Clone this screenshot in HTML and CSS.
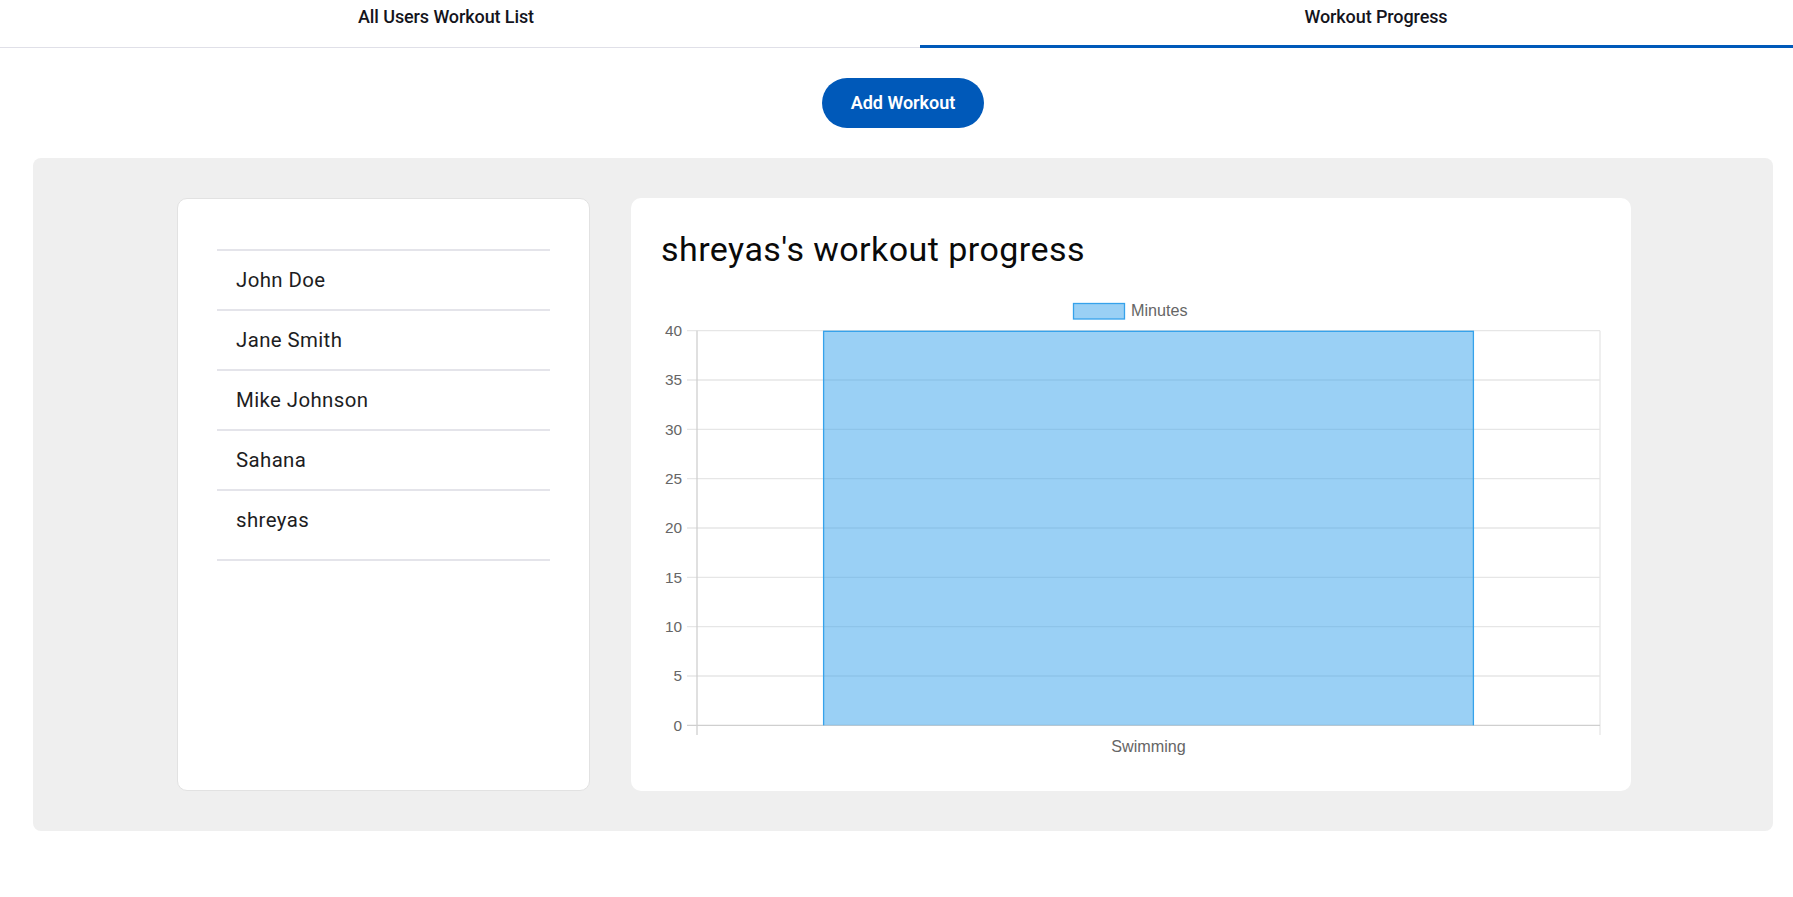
FILE: index.html
```html
<!DOCTYPE html>
<html lang="en">
<head>
<meta charset="utf-8">
<title>Workout Progress</title>
<link rel="stylesheet" href="styles.css">
</head>
<body>
<div class="page">
  <nav class="tabs">
    <div class="tab tab-list">All Users Workout List</div>
    <div class="tab tab-progress is-active">Workout Progress</div>
  </nav>

  <div class="actions">
    <button class="btn-add" type="button">Add Workout</button>
  </div>

  <section class="panel">
    <aside class="card users-card">
      <ul class="user-list">
        <li class="user-item">John Doe</li>
        <li class="user-item">Jane Smith</li>
        <li class="user-item">Mike Johnson</li>
        <li class="user-item">Sahana</li>
        <li class="user-item">shreyas</li>
      </ul>
    </aside>

    <main class="card progress-card">
      <h2 class="progress-title">shreyas's workout progress</h2>
      <svg class="chart" width="940" height="471" viewBox="0 0 940 471" xmlns="http://www.w3.org/2000/svg">
        <!-- legend -->
        <rect x="412.5" y="13.5" width="51" height="15.5" fill="rgba(54,162,235,0.5)" stroke="rgb(54,162,235)" stroke-width="1.3"/>
        <text x="470" y="26.3" class="chart-text">Minutes</text>

        <!-- horizontal grid lines + ticks -->
        <g stroke="#e6e6e6" stroke-width="1.3">
          <line x1="26" y1="40.7" x2="939" y2="40.7"/>
          <line x1="26" y1="90.0" x2="939" y2="90.0"/>
          <line x1="26" y1="139.3" x2="939" y2="139.3"/>
          <line x1="26" y1="188.7" x2="939" y2="188.7"/>
          <line x1="26" y1="238.0" x2="939" y2="238.0"/>
          <line x1="26" y1="287.3" x2="939" y2="287.3"/>
          <line x1="26" y1="336.7" x2="939" y2="336.7"/>
          <line x1="26" y1="386.0" x2="939" y2="386.0"/>
          <line x1="939" y1="40.7" x2="939" y2="445"/>
        </g>
        <g stroke="#cfcfcf" stroke-width="1.3">
          <line x1="26" y1="435.3" x2="939" y2="435.3"/>
          <line x1="36" y1="40.7" x2="36" y2="445"/>
        </g>

        <!-- y labels -->
        <g class="chart-text chart-ticks" text-anchor="end">
          <text x="21" y="46">40</text>
          <text x="21" y="95.3">35</text>
          <text x="21" y="144.6">30</text>
          <text x="21" y="194">25</text>
          <text x="21" y="243.3">20</text>
          <text x="21" y="292.6">15</text>
          <text x="21" y="342">10</text>
          <text x="21" y="391.3">5</text>
          <text x="21" y="440.6">0</text>
        </g>

        <!-- bar -->
        <rect x="162" y="40.7" width="651" height="394.6" fill="rgba(54,162,235,0.5)"/>
        <path d="M162.6 435.3 V41.3 H812.4 V435.3" fill="none" stroke="rgb(54,162,235)" stroke-width="1.3"/>

        <!-- x label -->
        <text x="487.5" y="462.3" class="chart-text" text-anchor="middle">Swimming</text>
      </svg>
    </main>
  </section>
</div>
</body>
</html>
```

FILE: styles.css
```css
html, body {
  margin: 0;
  padding: 0;
  overflow: hidden;
  background: #ffffff;
}

body {
  font-family: Roboto, "Noto Sans", Arial, sans-serif;
  color: #111;
}

.page {
  width: 1806px;
}

/* Tabs */
.tabs {
  display: flex;
  height: 47px;
  border-bottom: 1px solid #e0e0e8;
}

.tab {
  box-sizing: border-box;
  position: relative;
  height: 47px;
  padding-top: 6px;
  font-size: 18px;
  font-weight: 500;
  line-height: 21px;
  text-align: center;
  color: #14141c;
  letter-spacing: -0.1px;
}

.tab-list {
  flex: 0 0 920px;
  padding-right: 28px;
}

.tab-progress {
  flex: 1 1 auto;
  padding-left: 26px;
}

.tab.is-active::after {
  content: "";
  position: absolute;
  left: 0;
  right: 0;
  bottom: -1px;
  height: 3px;
  background: #0059b9;
}

/* Add button */
.actions {
  display: flex;
  justify-content: center;
  padding: 30px 0;
}

.btn-add {
  height: 50px;
  padding: 0 29px;
  border: none;
  border-radius: 25px;
  background: #0059b9;
  color: #fff;
  font-family: Roboto, Arial, sans-serif;
  font-size: 18px;
  font-weight: 600;
  line-height: 50px;
  cursor: pointer;
}

/* Panel */
.panel {
  margin: 0 33px;
  padding: 40px 40px 40px 42px;
  background: #efefef;
  border-radius: 8px;
  display: flex;
  justify-content: center;
  gap: 41px;
}

.card {
  box-sizing: border-box;
  background: #fff;
  border-radius: 10px;
  height: 593px;
}

.users-card {
  width: 413px;
  border: 1px solid #e2e2e2;
  padding: 50px 39px;
}

.user-list {
  list-style: none;
  margin: 0;
  padding: 0 0 10px;
  border-bottom: 2px solid #e4e4ea;
}

.user-item {
  height: 58px;
  border-top: 2px solid #e4e4ea;
  padding-left: 19px;
  display: flex;
  align-items: center;
  font-size: 20.4px;
  letter-spacing: 0.4px;
  color: #1d1d22;
}

.progress-card {
  width: 1000px;
  padding: 30px;
}

.progress-title {
  margin: 0 0 20px;
  font-size: 34px;
  font-weight: 400;
  line-height: 42px;
  letter-spacing: 0.45px;
  color: #0a0a0a;
}

.chart {
  display: block;
}

.chart-text {
  font-family: "Liberation Sans", Arial, sans-serif;
  font-size: 16.2px;
  fill: #666666;
}

.chart-ticks {
  font-size: 15.4px;
}
```
